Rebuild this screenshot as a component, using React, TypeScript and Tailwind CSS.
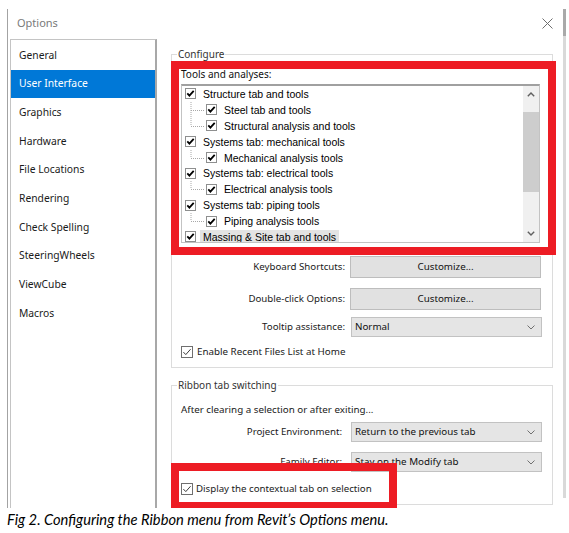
import React from "react";

const navItems = [
  "General",
  "User Interface",
  "Graphics",
  "Hardware",
  "File Locations",
  "Rendering",
  "Check Spelling",
  "SteeringWheels",
  "ViewCube",
  "Macros",
];

type Row = { label: string; level: 0 | 1; last?: boolean; hl?: boolean };

const rows: Row[] = [
  { label: "Structure tab and tools", level: 0 },
  { label: "Steel tab and tools", level: 1 },
  { label: "Structural analysis and tools", level: 1, last: true },
  { label: "Systems tab: mechanical tools", level: 0 },
  { label: "Mechanical analysis tools", level: 1, last: true },
  { label: "Systems tab: electrical tools", level: 0 },
  { label: "Electrical analysis tools", level: 1, last: true },
  { label: "Systems tab: piping tools", level: 0 },
  { label: "Piping analysis tools", level: 1, last: true },
  { label: "Massing & Site tab and tools", level: 0, hl: true },
];

// klasyczny checkbox z drzewka (gruby czarny ptaszek)
function TreeCheck() {
  return (
    <svg width="11" height="11" viewBox="0 0 11 11" className="shrink-0">
      <rect x="0.5" y="0.5" width="10" height="10" fill="#fff" stroke="#8e8f8f" />
      <path d="M2.3 5.4 L4.4 7.6 L8.7 2.9" fill="none" stroke="#000" strokeWidth="1.8" />
    </svg>
  );
}

// checkbox w stylu Win10
function WinCheck() {
  return (
    <svg width="12" height="12" viewBox="0 0 12 12" className="shrink-0">
      <rect x="0.5" y="0.5" width="11" height="11" fill="#fff" stroke="#6f6f6f" />
      <path d="M2.4 6.1 L4.8 8.6 L9.6 3.2" fill="none" stroke="#3c3c3c" strokeWidth="1" />
    </svg>
  );
}

function Chevron({ up = false }: { up?: boolean }) {
  return (
    <svg width="8" height="5" viewBox="0 0 8 5">
      <path
        d={up ? "M0.8 4.2 L4 1 L7.2 4.2" : "M0.8 0.8 L4 4 L7.2 0.8"}
        fill="none"
        stroke="#606060"
        strokeWidth="1.4"
      />
    </svg>
  );
}

function Connector({ last }: { last?: boolean }) {
  return (
    <svg width="21" height="16" viewBox="0 0 21 16" className="shrink-0">
      <line x1="6" y1="0" x2="6" y2={last ? 8 : 16} stroke="#a8a8a8" strokeDasharray="1 1" />
      <line x1="6" y1="8.5" x2="19" y2="8.5" stroke="#a8a8a8" strokeDasharray="1 1" />
    </svg>
  );
}

function Select({ value, ml = "ml-[6px]" }: { value: string; ml?: string }) {
  return (
    <div
      className={`${ml} flex h-[20px] w-[191px] items-center justify-between border border-[#c2c2c2] bg-[#e5e5e5] pl-[3px] pr-[6px] text-[9.8px] text-[#111]`}
    >
      <span>{value}</span>
      <svg width="8" height="5" viewBox="0 0 8 5">
        <path d="M0.5 0.5 L4 4 L7.5 0.5" fill="none" stroke="#707070" strokeWidth="1" />
      </svg>
    </div>
  );
}

function Button({ label }: { label: string }) {
  return (
    <div className="ml-[5px] flex h-[22px] w-[191px] items-center justify-center border border-[#bdbdbd] bg-[#e1e1e1] text-[9.8px] text-[#111]">
      {label}
    </div>
  );
}

export default function App() {
  return (
    <div className="h-[533px] w-[569px] overflow-hidden bg-white font-['Noto_Sans',sans-serif] text-[#1a1a1a]">
      <div className="flex h-[508px] pt-[9px]">
        <div className="ml-[7px] flex w-[556px] flex-col border-l border-[#a3a3a3]">
          {/* pasek tytułu */}
          <div className="flex h-[30px] shrink-0 items-center justify-between pb-[2px] pl-[9px] pr-[10px]">
            <span className="text-[11px] text-[#7a7a7a]">Options</span>
            <svg width="11" height="11" viewBox="0 0 11 11">
              <path d="M0.5 0.5 L10.5 10.5 M10.5 0.5 L0.5 10.5" stroke="#6e6e6e" strokeWidth="1" />
            </svg>
          </div>

          <div className="flex flex-1">
            {/* lista kategorii */}
            <div className="ml-[2px] w-[147px] shrink-0 border-l border-t border-r-2 border-l-[#c4c4c4] border-t-[#c4c4c4] border-r-[#a8a8a8] pt-[1px]">
              {navItems.map((n) => (
                <div
                  key={n}
                  className={`flex h-[28.67px] items-center pl-[8px] text-[10.3px] ${
                    n === "User Interface" ? "bg-[#0078d7] text-white" : ""
                  }`}
                >
                  {n}
                </div>
              ))}
            </div>

            {/* panel ustawień */}
            <div className="flex-1 pl-[14px] pr-[10px]">
              <fieldset className="mt-[9px] border border-[#dcdcdc] pb-[8px]">
                <legend className="ml-[5px] px-[1px] text-[10px] leading-[13px] text-[#333]">Configure</legend>

                {/* czerwona ramka: narzędzia i analizy */}
                <div className="-ml-[1px] -mr-[4px] h-[194px] border-[8px] border-[#ed1c24] bg-white">
                  <div className="pl-[2px] text-[10px] leading-[11px] text-[#111]">Tools and analyses:</div>
                  <div className="ml-[2px] mt-[4px] flex h-[159px] w-[359px] border border-[#c3c3c3] border-t-2 border-t-[#a0a0a0] bg-white">
                    <div className="flex-1 overflow-hidden font-['Liberation_Sans',Arial,sans-serif] text-[10.5px] text-black">
                      {rows.map((r) => (
                        <div key={r.label} className="flex h-[15.9px] items-center pl-[3px]">
                          {r.level === 1 && <Connector last={r.last} />}
                          <TreeCheck />
                          <span
                            className={`ml-[4px] px-[3px] leading-[14px] ${r.hl ? "bg-[#e3e3e3]" : ""}`}
                          >
                            {r.label}
                          </span>
                        </div>
                      ))}
                    </div>
                    <div className="flex w-[16px] shrink-0 flex-col bg-[#f0f0f0]">
                      <div className="flex h-[17px] items-center justify-center">
                        <Chevron up />
                      </div>
                      <div className="h-[9px]" />
                      <div className="h-[80px] bg-[#cdcdcd]" />
                      <div className="flex-1" />
                      <div className="flex h-[17px] items-center justify-center">
                        <Chevron />
                      </div>
                    </div>
                  </div>
                </div>

                <div className="mt-[1px] flex items-center">
                  <span className="w-[173px] text-right text-[9.7px]">Keyboard Shortcuts:</span>
                  <Button label="Customize..." />
                </div>
                <div className="mt-[10px] flex items-center">
                  <span className="w-[173px] text-right text-[9.7px]">Double-click Options:</span>
                  <Button label="Customize..." />
                </div>
                <div className="mt-[7px] flex items-center">
                  <span className="w-[173px] text-right text-[9.7px]">Tooltip assistance:</span>
                  <Select value="Normal" />
                </div>
                <div className="mt-[8px] flex h-[14px] items-center pl-[9px]">
                  <WinCheck />
                  <span className="ml-[4px] text-[9.8px]">Enable Recent Files List at Home</span>
                </div>
              </fieldset>

              <fieldset className="mt-[11px] border border-[#dcdcdc] pb-[8px]">
                <legend className="ml-[5px] px-[1px] text-[10px] leading-[13px] text-[#333]">
                  Ribbon tab switching
                </legend>
                <div className="mt-[11px] pl-[9px] text-[9.8px] leading-[13px]">
                  After clearing a selection or after exiting...
                </div>
                <div className="mt-[6px] flex items-center">
                  <span className="w-[170px] text-right text-[9.7px]">Project Environment:</span>
                  <Select value="Return to the previous tab" ml="ml-[9px]" />
                </div>
                <div className="mt-[10px] flex items-center">
                  <span className="w-[170px] text-right text-[9.7px]">Family Editor:</span>
                  <Select value="Stay on the Modify tab" ml="ml-[9px]" />
                </div>
                <div className="relative mt-[10px] flex h-[14px] items-center pl-[9px]">
                  <WinCheck />
                  <span className="ml-[3px] text-[9.7px]">Display the contextual tab on selection</span>
                  {/* czerwona ramka adnotacji */}
                  <div className="pointer-events-none absolute -left-[1px] -top-[19px] h-[45px] w-[226px] border-x-[8px] border-t-[8px] border-b-[6px] border-[#ed1c24]" />
                </div>
              </fieldset>
            </div>
          </div>
        </div>
        <div className="flex w-[3px] flex-col">
          <div className="h-[27px] bg-[#a9a9a9]" />
          <div className="h-[462px] bg-[#d9d9d9]" />
        </div>
      </div>
      <p className="mt-[2px] pl-[7px] font-['Lato',sans-serif] text-[14.7px] italic leading-[18px] text-black">
        Fig 2. Configuring the Ribbon menu from Revit’s Options menu.
      </p>
    </div>
  );
}
